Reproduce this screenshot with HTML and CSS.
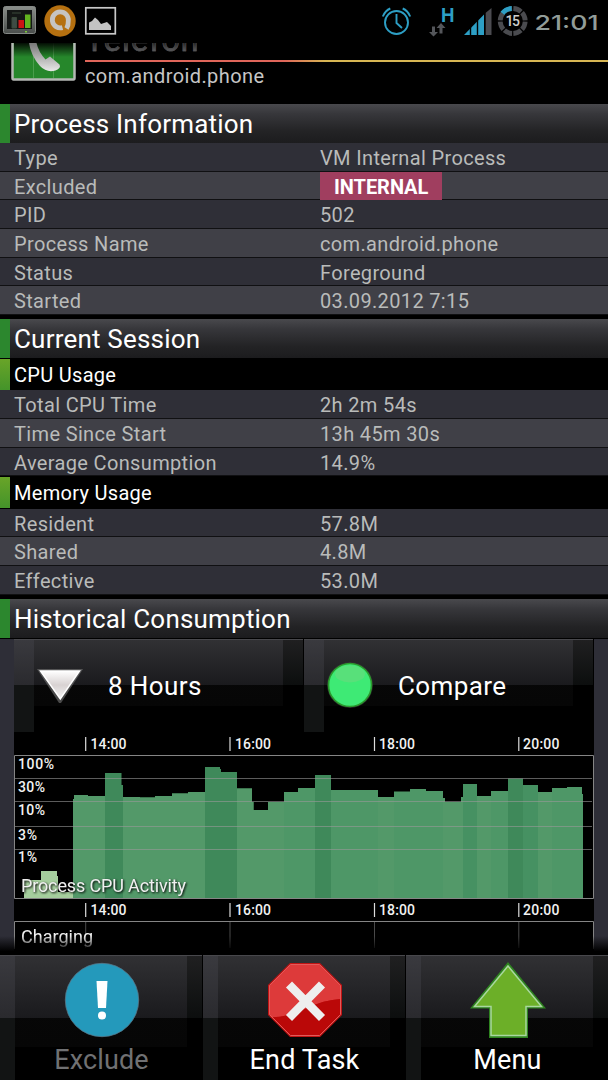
FILE: index.html
```html
<!DOCTYPE html>
<html lang="en">
<head>
<meta charset="utf-8">
<title>Process details</title>
<link rel="stylesheet" href="styles.css">
</head>
<body>
<div class="screen">
  <header class="status">
    <svg class="status-art" width="608" height="43" viewBox="0 0 608 43">
      <defs>
        <linearGradient id="frame" x1="0" y1="0" x2="0" y2="1"><stop offset="0" stop-color="#8a8e8a"/><stop offset="1" stop-color="#4a4e4c"/></linearGradient>
      </defs>
      <rect x="3.500" y="6.500" width="32" height="27" rx="2" fill="url(#frame)" stroke="#858986"/>
      <rect x="7" y="10" width="25" height="19" fill="#141716"/>
      <path d="M12 13h9M12 17.500h4.500v10.500h-4.500z" fill="#3f4b45" stroke="#3a4a3a"/>
      <rect x="18.500" y="20" width="5.500" height="8" fill="#cc1515"/>
      <rect x="25" y="14.500" width="5.500" height="13.500" fill="#62b41f"/>
      <rect x="25" y="31" width="2" height="1.500" fill="#7dcc3a"/>
      <circle cx="60" cy="21" r="15.700" fill="#b57010"/>
      <path d="M62.500 27.600A8 8 0 1 1 68.300 20.500Q68.500 25.500 66.500 28.500" fill="none" stroke="#c6c4c2" stroke-width="4.800"/>
      <rect x="85.800" y="7.800" width="29.500" height="26" fill="none" stroke="#c8c8c8" stroke-width="1.700"/>
      <path d="M89 30v-7.500l3-1.500 3-3.500 3 2.500 3 4 3-1 3-1 4 4v4z" fill="#c3c3c3"/>
      <g fill="none" stroke="#2d9fc5" stroke-width="1.900">
        <circle cx="396.500" cy="22.500" r="11.500"/>
        <path d="M396.500 14v9l5.500 5M382.800 16.500q2.500-6 7.500-8M410.200 16.500q-2.500-6-7.500-8"/>
      </g>
      <text x="441" y="22" class="network" textLength="13.500" lengthAdjust="spacingAndGlyphs">H</text>
      <path d="M432 26.500h3V32h3l-4.500 4.500-4.500-4.500h3zM439.500 33.500h3V28h3l-4.500-5-4.500 5h3z" fill="#54565a"/>
      <path d="M464 35L484 14.500V35z" fill="#2d9fc5"/>
      <path d="M485.500 13L491.500 8v27h-6z" fill="#4b4b50"/>
      <path d="M470.500 27v9M477.500 20v16M484.700 12v24" stroke="#000" stroke-width="1.400"/>
      <circle cx="512.700" cy="21" r="12.500" fill="none" stroke="#4a4b4f" stroke-width="4.800" pathLength="80" stroke-dasharray="8.600 1.400" stroke-dashoffset="-.7"/>
      <path d="M502.400 13.300A12.500 12.500 0 0 1 511.700 8.500" fill="none" stroke="#2d9fc5" stroke-width="4.800"/>
      <text x="505.500" y="25.800" class="battery" textLength="14.500">15</text>
      <text x="534.500" y="29.700" class="clock" textLength="64" lengthAdjust="spacingAndGlyphs">21:01</text>
    </svg>
  </header>

  <section class="app">
    <svg class="app-icon" width="66" height="40" viewBox="0 0 66 40">
      <defs>
        <linearGradient id="fade" x1="0" y1="0" x2="0" y2="1"><stop offset="0" stop-opacity=".9"/><stop offset="1" stop-opacity="0"/></linearGradient>
        <linearGradient id="handset" x1="0" y1="0" x2="0" y2="1"><stop offset="0" stop-color="#777"/><stop offset="1" stop-color="#e8e8e8"/></linearGradient>
      </defs>
      <path d="M1.500 0v35q0 1.500 1 1.500h60q1 0 1-1.500V0" fill="#26872b" stroke="#b4b8b4" stroke-width="2.500"/>
      <path d="M22.500 0v35M42.500 0v35" stroke="#54a456" stroke-width=".8"/>
      <rect x="3" y="0" width="59" height="14" fill="url(#fade)"/>
      <path d="M18 0h7.500q2 9 9 16.500l4.500-3 9.500 8q2 3.500-4 6-9 2.500-15.500-4.500Q20 13 18 0z" fill="url(#handset)"/>
    </svg>
    <div class="app-text">
      <div class="app-name"><span>Telefon</span></div>
      <div class="rule"></div>
      <div class="package">com.android.phone</div>
    </div>
  </section>

  <h2 class="section">Process Information</h2>
  <dl class="rows">
    <div class="row"><dt>Type</dt><dd>VM Internal Process</dd></div>
    <div class="row"><dt>Excluded</dt><dd><span class="badge">INTERNAL</span></dd></div>
    <div class="row"><dt>PID</dt><dd>502</dd></div>
    <div class="row"><dt>Process Name</dt><dd>com.android.phone</dd></div>
    <div class="row"><dt>Status</dt><dd>Foreground</dd></div>
    <div class="row"><dt>Started</dt><dd>03.09.2012 7:15</dd></div>
  </dl>

  <h2 class="section spaced">Current Session</h2>
  <h3 class="sub">CPU Usage</h3>
  <dl class="rows">
    <div class="row"><dt>Total CPU Time</dt><dd>2h 2m 54s</dd></div>
    <div class="row"><dt>Time Since Start</dt><dd>13h 45m 30s</dd></div>
    <div class="row"><dt>Average Consumption</dt><dd>14.9%</dd></div>
  </dl>
  <h3 class="sub">Memory Usage</h3>
  <dl class="rows">
    <div class="row"><dt>Resident</dt><dd>57.8M</dd></div>
    <div class="row"><dt>Shared</dt><dd>4.8M</dd></div>
    <div class="row"><dt>Effective</dt><dd>53.0M</dd></div>
  </dl>

  <h2 class="section spaced">Historical Consumption</h2>
  <section class="history">
    <div class="controls">
      <button class="glass wide">
        <svg width="48" height="36" viewBox="0 0 48 36">
          <defs><linearGradient id="tri" x1="0" y1="0" x2="0" y2="1"><stop offset="0" stop-color="#fff"/><stop offset=".5" stop-color="#d8d2d2"/><stop offset="1" stop-color="#f4f4f4"/></linearGradient></defs>
          <path d="M1 2h46L25 36h-2z" fill="#777" opacity=".6"/>
          <path d="M4.500 4h39L24.300 32z" fill="url(#tri)" stroke="#fff" stroke-width="1.500"/>
        </svg>
        <span>8 Hours</span>
      </button>
      <button class="glass wide">
        <svg width="48" height="48" viewBox="0 0 48 48">
          <circle cx="24" cy="24" r="23" fill="#333" opacity=".7"/>
          <circle cx="24" cy="24" r="21.500" fill="#3eea75" stroke="#2a9a2d" stroke-width="1.600"/>
          <ellipse cx="24" cy="13" rx="15" ry="8.500" fill="#58e07a"/>
        </svg>
        <span>Compare</span>
      </button>
    </div>
    <svg class="chart" width="580" height="222" viewBox="14 732 580 222">
      <g class="axis">
        <path d="M85.700 737v14M230 737v14M374.500 737v14M518.800 737v14M85.700 903v14M230 903v14M374.500 903v14M518.800 903v14"/>
        <g class="ticks">
          <text x="90.500" y="748.500" textLength="36">14:00</text><text x="235" y="748.500" textLength="36">16:00</text><text x="379" y="748.500" textLength="36">18:00</text><text x="523" y="748.500" textLength="36.500">20:00</text>
          <text x="90.500" y="915" textLength="36">14:00</text><text x="235" y="915" textLength="36">16:00</text><text x="379" y="915" textLength="36">18:00</text><text x="523" y="915" textLength="36.500">20:00</text>
        </g>
      </g>
      <path fill="#a5ce9d" d="M24 898V880h17v-9h16v5h1v16h15v6z"/>
      <path fill="#4e9767" d="M73 898V799h1V795h14v1h17V898zM123 898V797h17v.5h15V796h17v-2.500h16V792h17V898zM237 898V788.500h15V802h1.500v8H268v-8h16V792h14v-4h17V898zM331 898v-108h47v7h16v-5.500h16V789h16v2h17v7h2v4h16v-5h2v-13h14v12h14v-5h17V898zM523 898V785h15v7h14v-4h15v-1h15v7h1V898z"/>
      <path fill="#539969" d="M73 799h1v-4h14v1h17v102h-32zM123 797h17v.500h15V796h17v-2.500h16V792h17v106h-82zM237 788.500h15V802h1.500v8H268v-8h16v96h-47zM378 797h16v101h-16zM443 798h2v4h18v96h-20zM477 796h14v102h-14zM538 792h14v106h-14z"/>
      <path fill="#469162" d="M463 784h14v114h-14zM523 785h15v113h-15z"/>
      <path fill="#3f895a" d="M105 898V773h16.500v12h1.500v113zM205 898V767h15v2h1v3h16v126zM315 898V775h16v123zM508 898V778.500h15V898z"/>
      <path class="grid" d="M15 778.500H592M15 801.500H592M15 826.500H592M15 849.500H592"/>
      <path class="box" d="M14.500 898.500V755.500H593.500V898.500zM14.500 949V921.500H593.500V949"/>
      <path d="M85.700 922v26M230 922v26M374.500 922v26M518.800 922v26" stroke="#4a4a4a"/>
      <g class="percent">
        <text x="18" y="769" textLength="36">100%</text><text x="18" y="791.500" textLength="27">30%</text><text x="18" y="815" textLength="27">10%</text><text x="18" y="839.500" textLength="19">3%</text><text x="18" y="862" textLength="19">1%</text>
      </g>
      <g class="caption">
        <text x="21" y="892" textLength="165">Process CPU Activity</text>
        <text x="21" y="943" textLength="72">Charging</text>
      </g>
    </svg>
    <div class="scroll-fade"></div>
  </section>

  <footer class="actions">
    <button class="glass action muted">
      <svg width="78" height="78" viewBox="0 0 78 78">
        <circle cx="39" cy="39" r="36.700" fill="#2499bb" stroke="#57788a" stroke-width=".8"/>
        <path d="M33.500 20h11l-1.500 27h-8z" fill="#fff"/><circle cx="39" cy="54.500" r="4" fill="#fff"/>
      </svg>
      <span>Exclude</span>
    </button>
    <button class="glass action">
      <svg width="78" height="78" viewBox="0 0 78 78">
        <defs><clipPath id="oct"><path d="M24.500 3.500h29l21 21v29l-21 21h-29l-21-21v-29z"/></clipPath></defs>
        <path d="M24 2h30l22 22v30L54 76H24L2 54V24z" fill="#c01414"/>
        <g clip-path="url(#oct)"><path d="M0 0h78v38Q60 38 39 48T0 56z" fill="#dd3a3a"/><path d="M78 38Q60 38 39 48T0 56v22h78z" fill="#ba0808"/></g>
        <path d="M24.500 3.500h29l21 21v29l-21 21h-29l-21-21v-29z" fill="none" stroke="#e25a5a"/>
        <path d="M23 23.500L56 57M56 23.500L23 57" stroke="#eee" stroke-width="8.500"/>
      </svg>
      <span>End Task</span>
    </button>
    <button class="glass action">
      <svg width="78" height="78" viewBox="0 0 78 78">
        <path d="M39 1L77 47.500H59V77H20V47.500H1z" fill="#2f8420"/>
        <path d="M39 5L72.500 45.500H57V74.500H22V45.500H5.500z" fill="#6caf28" stroke="#a9d79f" stroke-width="1.500"/>
      </svg>
      <span>Menu</span>
    </button>
  </footer>
</div>
</body>
</html>
```
FILE: styles.css
```css
* { box-sizing: border-box; }
body { margin: 0; background: #000; color: #fff; font-family: Roboto, sans-serif; }
h2, h3, dl, dd, dt { margin: 0; font-weight: 400; }
button { border: 0; padding: 0; color: inherit; font: inherit; }
svg { display: block; flex: none; }

.screen { width: 608px; height: 1080px; overflow: hidden; display: flex; flex-direction: column; background: #000; }
.screen > * { flex: none; }

.status { height: 43px; }
.network { font: 700 20px "Liberation Sans", sans-serif; fill: #2d9fc5; }
.battery { font: 500 14px Roboto, sans-serif; fill: #ccc; }
.clock { font: 500 20.5px Inter, sans-serif; fill: #929c98; }

.app { display: flex; height: 61px; padding-left: 11px; gap: 8px; }
.app-text { flex: 1; }
.app-name { height: 17px; overflow: hidden; font-size: 32px; letter-spacing: 1.2px; line-height: 36px; }
.app-name span { display: block; margin-top: -21.5px; color: transparent; background: linear-gradient(#222 58%, #68686a 85%); -webkit-background-clip: text; background-clip: text; -webkit-text-stroke: .6px #4c4c4e; }
.rule { height: 2px; background: linear-gradient(90deg, #e0665a 0, #e0665a 38%, #d7b653 46%, #d7b653 100%); }
.package { margin-top: 1px; font-size: 20px; line-height: 26px; letter-spacing: .4px; color: #c6c6c6; }

.section { height: 39px; border-left: 10px solid #2c872e; padding-left: 4px; font-size: 26px; line-height: 41px; letter-spacing: .2px; background: linear-gradient(#49494d, #37373b 25%, #232325 70%, #1c1c1e); }
.spaced { margin-top: 4px; }
.sub { height: 32.33px; padding-left: 14px; font-size: 20px; line-height: 34px; letter-spacing: .3px; background: linear-gradient(#69a428, #44942a) 0 1px / 10px 31px no-repeat; }
.row { display: grid; grid-template-columns: 306px 1fr; height: 28.67px; padding-left: 14px; border-bottom: 1px solid #101012; background: #2f2f37; color: #b9bbba; font-size: 20px; line-height: 31px; letter-spacing: .35px; }
.row:nth-child(even) { background: #404047; }
.badge { display: inline-block; height: 28px; padding: 0 14px; background: #a03e5f; color: #fff; font-weight: 700; letter-spacing: -.05px; vertical-align: top; }

.history { height: 316px; padding: 0 14px; background: #2e2e37; position: relative; border-top: 1px solid #000; }
.controls { display: grid; grid-template-columns: 290px 290px; background: #000; }
.chart { background: #000; }
.glass { --edge: 20px; --half: 46px; --tail: 67px;
  background:
    linear-gradient(#48484c, #48484c) 0 0 / 100% 1px no-repeat,
    linear-gradient(#3a3a3f, #2a2a2e) 0 0 / var(--edge) var(--half) no-repeat,
    linear-gradient(#121414, #121414) 0 0 / var(--edge) 100% no-repeat,
    linear-gradient(#202021, #0c0e0e) 100% 0 / var(--edge) var(--half) no-repeat,
    linear-gradient(#313134, #1a1a1d) 0 0 / 100% var(--half) no-repeat,
    linear-gradient(#080808, #060606) 0 0 / calc(100% - var(--edge)) var(--tail) no-repeat,
    #000; }
.wide { display: flex; align-items: center; height: 93px; padding-left: 22px; gap: 24px; font-size: 26px; letter-spacing: .4px; border-right: 1px solid #000; }
.wide span { padding-top: 2px; }
.axis path { stroke: #ddd; stroke-width: 1.2; }
.ticks text, .percent text { font-size: 14px; font-weight: 500; fill: #f2f2f2; }
.grid { stroke: #9a9a9a; opacity: .6; fill: none; }
.box { stroke: #858585; fill: none; }
.caption text { font-size: 18px; fill: #f0f0f0; filter: drop-shadow(1px 1px 1px #000); }
.scroll-fade { position: absolute; left: 0; right: 0; bottom: 0; height: 18px; background: linear-gradient(transparent, #000 85%); }

.actions { display: grid; grid-template-columns: 1fr 1fr 1fr; height: 126px; gap: 1px; padding-top: 1px; }
.action { --edge: 15px; --half: 63px; --tail: 92px; display: flex; flex-direction: column; align-items: center; padding: 6px 0 0 1px; font-size: 27px; line-height: 32px; letter-spacing: .15px; }
.action span { margin-top: 5px; }
.muted { color: #707173; }
```
